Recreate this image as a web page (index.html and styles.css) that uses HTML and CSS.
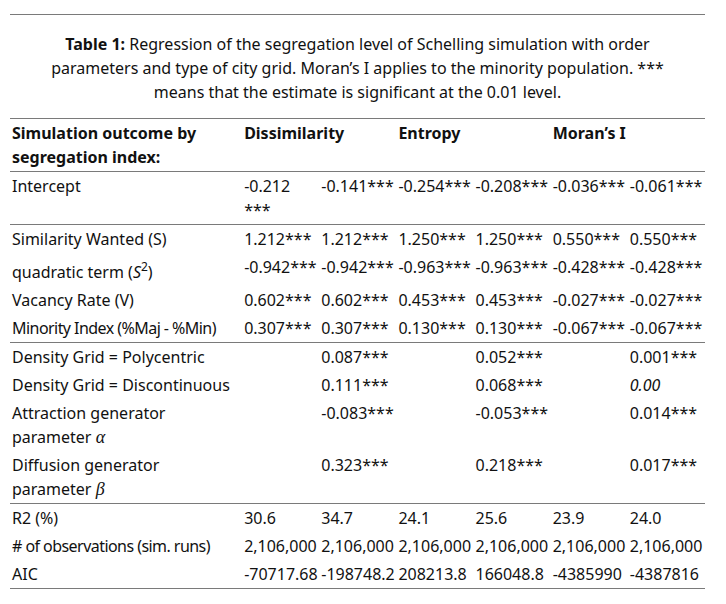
FILE: index.html
```html
<!DOCTYPE html>
<html lang="en">
<head>
<meta charset="utf-8">
<title>Table 1</title>
<link rel="stylesheet" href="styles.css">
</head>
<body>
<div class="figure">
  <p class="caption"><b>Table 1:</b> Regression of the segregation level of Schelling simulation with order parameters and type of city grid. Moran’s I applies to the minority population. *** means that the estimate is significant at the 0.01 level.</p>
  <table class="reg">
    <colgroup>
      <col class="c-label">
      <col class="c-val"><col class="c-val"><col class="c-val"><col class="c-val"><col class="c-val"><col class="c-val">
    </colgroup>
    <thead>
      <tr>
        <th>Simulation outcome by segregation index:</th>
        <th colspan="2">Dissimilarity</th>
        <th colspan="2">Entropy</th>
        <th colspan="2">Moran’s I</th>
      </tr>
    </thead>
    <tbody class="grp">
      <tr><td>Intercept</td><td>-0.212 ***</td><td>-0.141***</td><td>-0.254***</td><td>-0.208***</td><td>-0.036***</td><td>-0.061***</td></tr>
    </tbody>
    <tbody class="grp">
      <tr><td>Similarity Wanted (S)</td><td>1.212***</td><td>1.212***</td><td>1.250***</td><td>1.250***</td><td>0.550***</td><td>0.550***</td></tr>
      <tr><td>quadratic term (<i>S</i><sup>2</sup>)</td><td>-0.942***</td><td>-0.942***</td><td>-0.963***</td><td>-0.963***</td><td>-0.428***</td><td>-0.428***</td></tr>
      <tr><td>Vacancy Rate (V)</td><td>0.602***</td><td>0.602***</td><td>0.453***</td><td>0.453***</td><td>-0.027***</td><td>-0.027***</td></tr>
      <tr><td class="tight">Minority Index (%Maj - %Min)</td><td>0.307***</td><td>0.307***</td><td>0.130***</td><td>0.130***</td><td>-0.067***</td><td>-0.067***</td></tr>
    </tbody>
    <tbody class="grp">
      <tr><td>Density Grid = Polycentric</td><td></td><td>0.087***</td><td></td><td>0.052***</td><td></td><td>0.001***</td></tr>
      <tr><td>Density Grid = Discontinuous</td><td></td><td>0.111***</td><td></td><td>0.068***</td><td></td><td><i>0.00</i></td></tr>
      <tr><td>Attraction generator parameter <span class="math">α</span></td><td></td><td>-0.083***</td><td></td><td>-0.053***</td><td></td><td>0.014***</td></tr>
      <tr><td>Diffusion generator parameter <span class="math">β</span></td><td></td><td>0.323***</td><td></td><td>0.218***</td><td></td><td>0.017***</td></tr>
    </tbody>
    <tbody class="grp">
      <tr><td>R2 (%)</td><td>30.6</td><td>34.7</td><td>24.1</td><td>25.6</td><td>23.9</td><td>24.0</td></tr>
      <tr><td class="tight"># of observations (sim. runs)</td><td>2,106,000</td><td>2,106,000</td><td>2,106,000</td><td>2,106,000</td><td>2,106,000</td><td>2,106,000</td></tr>
      <tr><td>AIC</td><td>-70717.68</td><td>-198748.2</td><td>208213.8</td><td>166048.8</td><td>-4385990</td><td>-4387816</td></tr>
    </tbody>
  </table>
</div>
</body>
</html>
```

FILE: styles.css
```css
html, body {
  margin: 0;
  padding: 0;
  background: #ffffff;
}

body {
  font-family: "Noto Sans", "Open Sans", sans-serif;
  font-size: 16px;
  color: #111111;
}

.figure {
  width: 695px;
  margin: 14px 0 0 10px;
  border-top: 1px solid #7a7a7a;
}

.caption {
  margin: 0;
  padding: 17px 36px 14px;
  text-align: center;
  line-height: 24px;
}

.caption b {
  font-weight: 700;
}

.reg {
  width: 695px;
  border-collapse: collapse;
  table-layout: fixed;
  line-height: 24px;
}

.c-label {
  width: 232px;
}

.c-val {
  width: 77.1px;
}

.reg th,
.reg td {
  text-align: left;
  vertical-align: top;
  padding: 2px 2px;
  font-weight: 400;
  white-space: normal;
}

.reg th {
  font-weight: 700;
}

.reg thead tr {
  border-top: 1px solid #7a7a7a;
  border-bottom: 1px solid #7a7a7a;
}

.reg tbody.grp {
  border-bottom: 1px solid #7a7a7a;
}

.reg td:not(:first-child) {
  padding-right: 0;
}

.reg td.tight {
  white-space: nowrap;
  letter-spacing: -0.55px;
}

.reg sup {
  font-size: 12px;
  vertical-align: 7px;
}

.math {
  font-family: "Liberation Serif", "DejaVu Serif", serif;
  font-style: italic;
  font-size: 18px;
  line-height: 24px;
}
```
